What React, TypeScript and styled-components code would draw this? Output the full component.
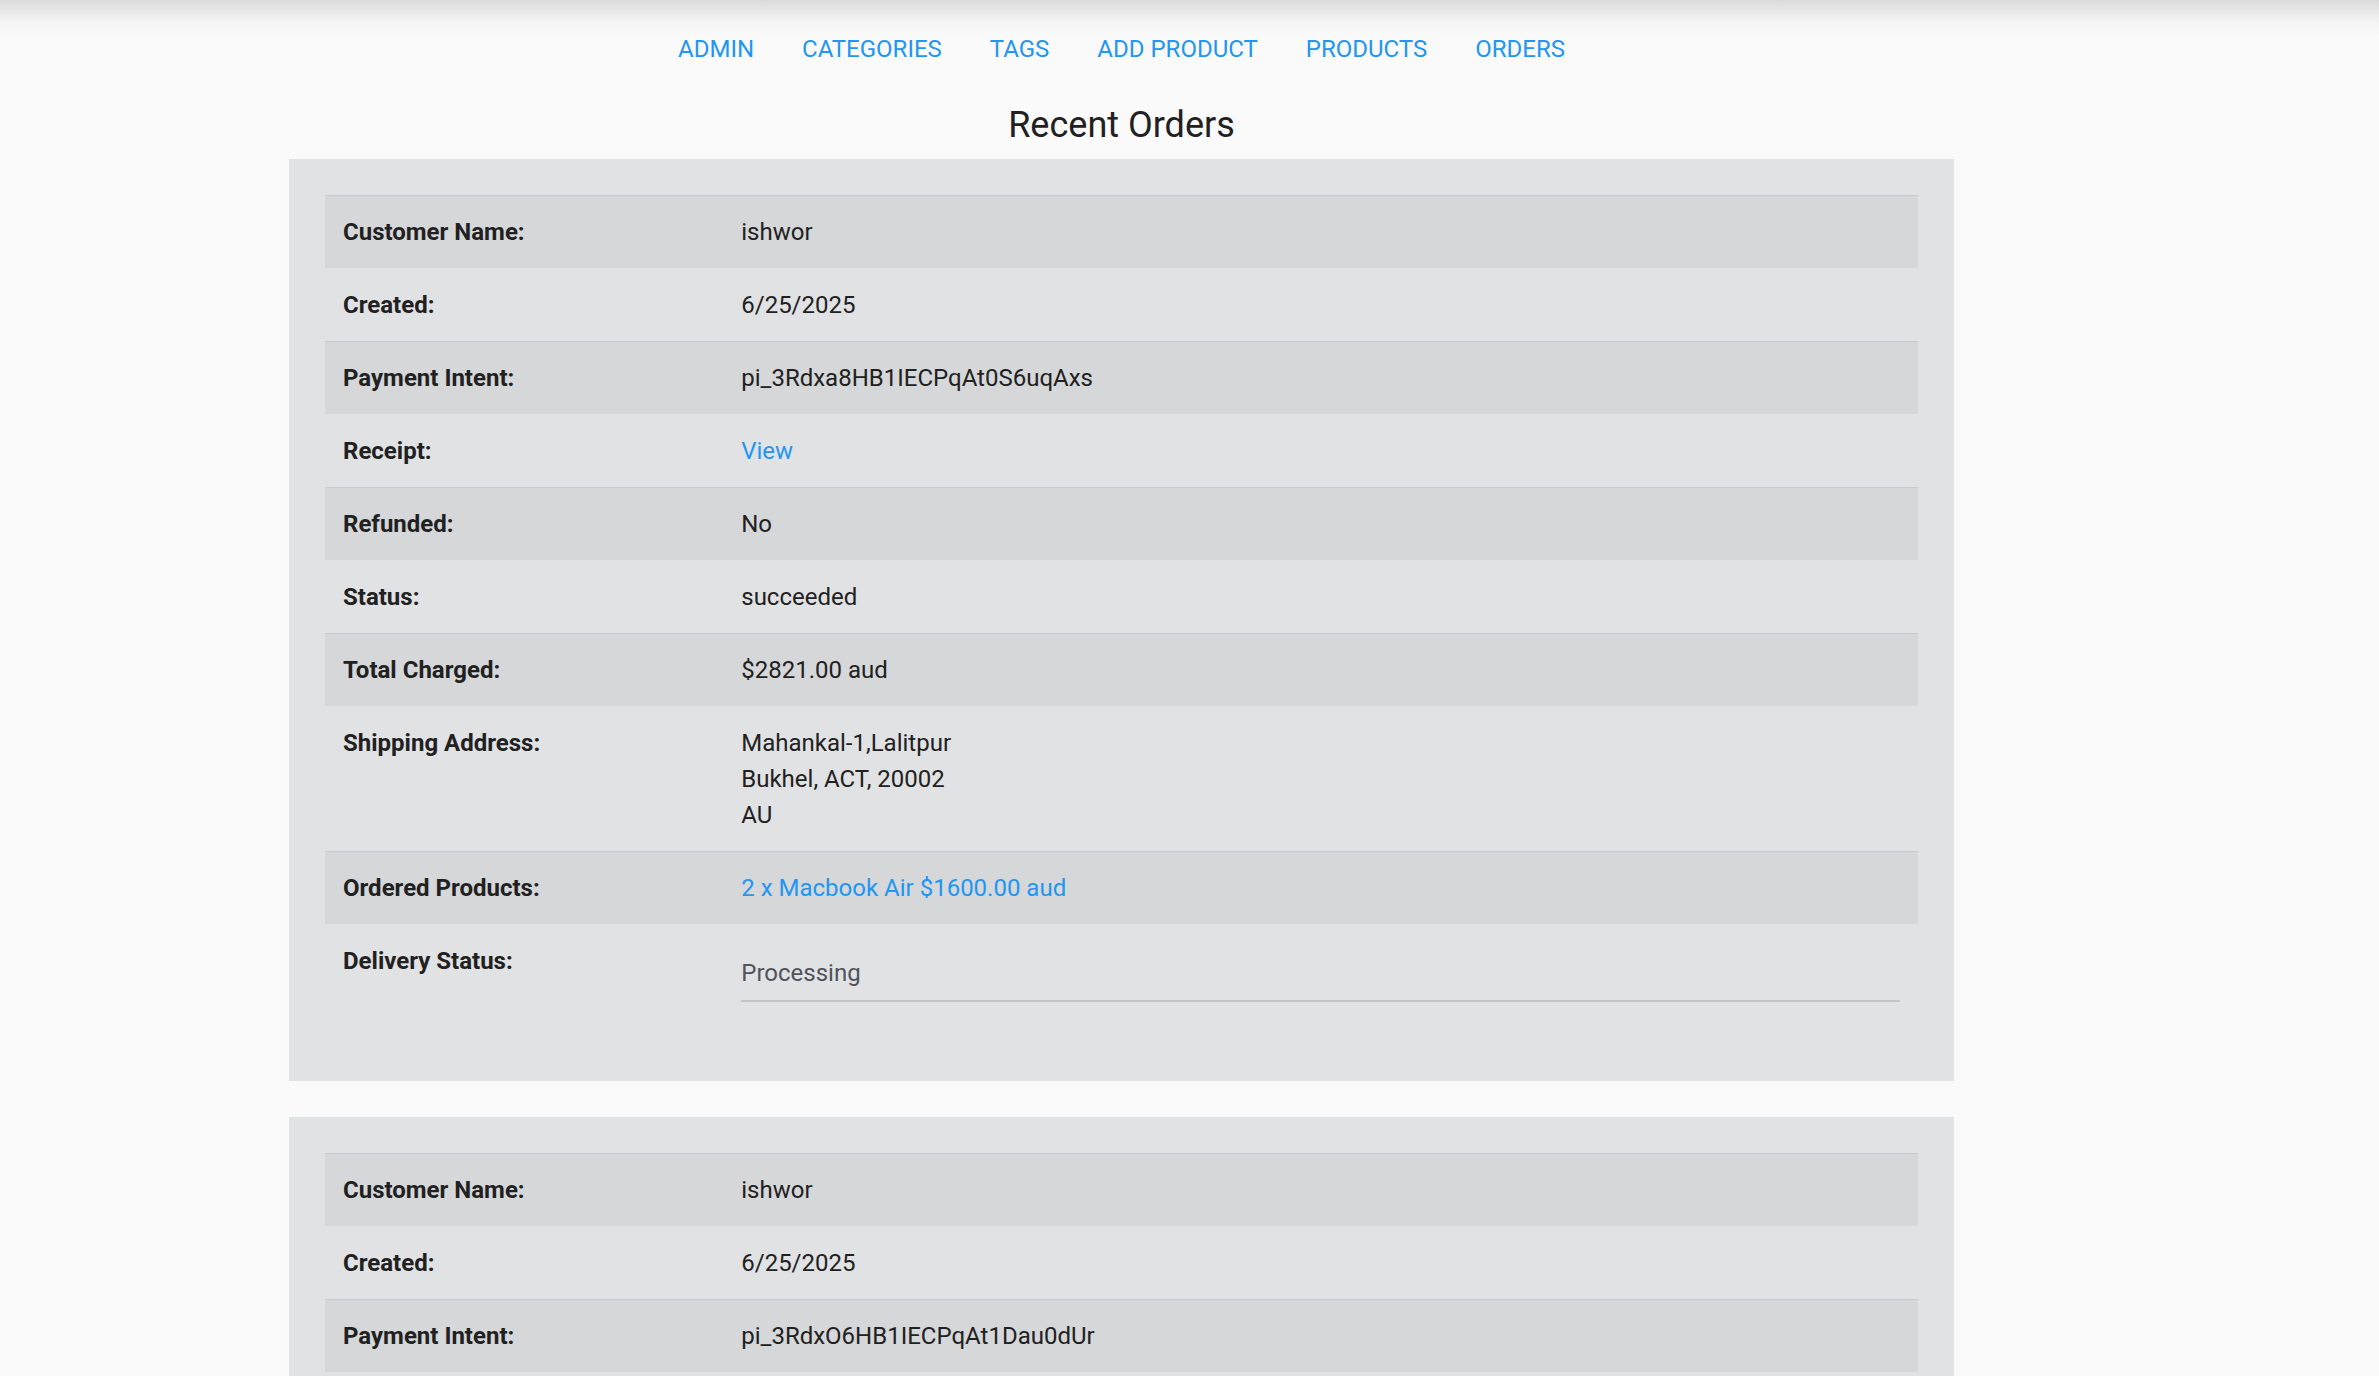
import React from "react";
import styled, { createGlobalStyle } from "styled-components";

const GlobalStyle = createGlobalStyle`
  html { overflow: hidden; }
  body {
    margin: 0;
    font-family: Roboto, "Liberation Sans", Arial, sans-serif;
    color: #212121;
    background: linear-gradient(to bottom, #dbdbdb 0px, #f4f4f4 22px, #fafafa 36px) no-repeat, #fafafa;
  }
  * { box-sizing: border-box; }
`;

const Main = styled.main`
  padding-right: 136px;
`;

const Nav = styled.nav`
  height: 97px;
  display: flex;
  justify-content: center;
  align-items: center;
  gap: 48px;
`;

const NavLink = styled.a`
  font-size: 24px;
  line-height: 36px;
  color: #2196f3;
  text-decoration: none;
  text-transform: uppercase;
`;

const Title = styled.h1`
  margin: 10px 0 16px;
  font-size: 36px;
  line-height: 36px;
  font-weight: 400;
  text-align: center;
  color: #212121;
`;

const Card = styled.section`
  width: 1665px;
  margin: 0 auto 36px;
  padding: 36px;
  background: #e1e2e4;
`;

const Table = styled.table`
  width: 100%;
  border-collapse: collapse;
  table-layout: fixed;
`;

const Row = styled.tr<{ $shaded: boolean }>`
  border-top: 1px solid ${(p) => (p.$shaded ? "#c9cacd" : "#e1e2e4")};
  background: ${(p) => (p.$shaded ? "#d6d7d9" : "transparent")};
`;

const LabelCell = styled.th`
  width: 25%;
  padding: 18px;
  text-align: left;
  vertical-align: top;
  font-size: 24px;
  line-height: 36px;
  font-weight: 700;
  color: #212121;
`;

const ValueCell = styled.td`
  padding: 18px;
  vertical-align: top;
  font-size: 24px;
  line-height: 36px;
  font-weight: 400;
  color: #212121;
`;

const Line = styled.div`
  white-space: nowrap;
`;

const Link = styled.a`
  color: #2196f3;
  text-decoration: none;
`;

const SelectInput = styled.input`
  display: block;
  width: 100%;
  height: 55px;
  margin: 0 0 25px;
  padding: 2px 0 0;
  border: none;
  border-bottom: 2px solid #c4c5c7;
  background: transparent;
  outline: none;
  font-family: Roboto, "Liberation Sans", Arial, sans-serif;
  font-size: 24px;
  color: #50535a;
  box-sizing: content-box;
`;

type Order = {
  name: string;
  created: string;
  intent: string;
  refunded: string;
  status: string;
  total: string;
  address: string[];
  products: string[];
  delivery: string;
};

const orders: Order[] = [
  {
    name: "ishwor",
    created: "6/25/2025",
    intent: "pi_3Rdxa8HB1IECPqAt0S6uqAxs",
    refunded: "No",
    status: "succeeded",
    total: "$2821.00 aud",
    address: ["Mahankal-1,Lalitpur", "Bukhel, ACT, 20002", "AU"],
    products: ["2 x Macbook Air $1600.00 aud"],
    delivery: "Processing",
  },
  {
    name: "ishwor",
    created: "6/25/2025",
    intent: "pi_3RdxO6HB1IECPqAt1Dau0dUr",
    refunded: "No",
    status: "succeeded",
    total: "$1221.00 aud",
    address: ["Mahankal-1,Lalitpur", "Bukhel, ACT, 20002", "AU"],
    products: ["1 x Macbook Air $800.00 aud"],
    delivery: "Processing",
  },
];

const OrderCard: React.FC<{ order: Order }> = ({ order }) => {
  const rows: [string, React.ReactNode][] = [
    ["Customer Name:", order.name],
    ["Created:", order.created],
    ["Payment Intent:", order.intent],
    ["Receipt:", <Link href="#">View</Link>],
    ["Refunded:", order.refunded],
    ["Status:", order.status],
    ["Total Charged:", order.total],
    [
      "Shipping Address:",
      order.address.map((l) => <Line key={l}>{l}</Line>),
    ],
    [
      "Ordered Products:",
      order.products.map((p) => (
        <Line key={p}>
          <Link href="#">{p}</Link>
        </Line>
      )),
    ],
    [
      "Delivery Status:",
      <SelectInput readOnly value={order.delivery} />,
    ],
  ];
  return (
    <Card>
      <Table>
        <tbody>
          {rows.map(([label, value], i) => (
            <Row key={label} $shaded={i % 2 === 0}>
              <LabelCell>{label}</LabelCell>
              <ValueCell>{value}</ValueCell>
            </Row>
          ))}
        </tbody>
      </Table>
    </Card>
  );
};

export default function App() {
  const links = ["Admin", "Categories", "Tags", "Add Product", "Products", "Orders"];
  return (
    <>
      <GlobalStyle />
      <Main>
        <Nav>
          {links.map((l) => (
            <NavLink key={l} href="#">
              {l}
            </NavLink>
          ))}
        </Nav>
        <Title>Recent Orders</Title>
        {orders.map((o) => (
          <OrderCard key={o.intent} order={o} />
        ))}
      </Main>
    </>
  );
}
